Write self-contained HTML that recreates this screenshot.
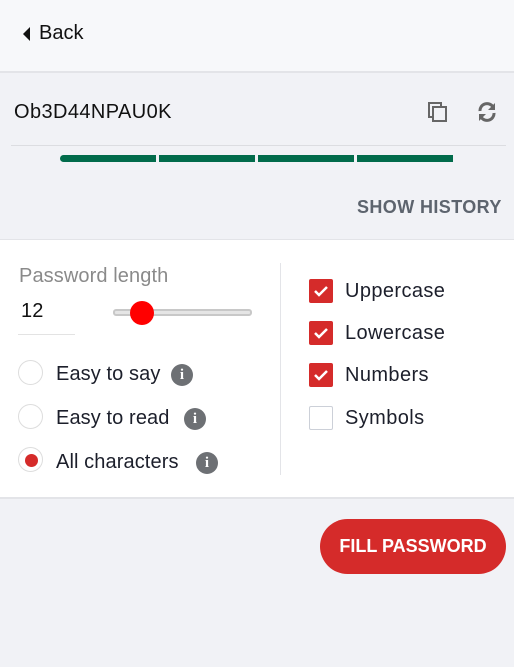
<!DOCTYPE html>
<html><head><style>
*{margin:0;padding:0;box-sizing:border-box}
body{width:514px;height:667px;position:relative;background:#f1f2f6;font-family:"Liberation Sans",sans-serif;overflow:hidden;color:#1c1f2b}
.a{position:absolute}
.t{font-size:20px;white-space:nowrap;letter-spacing:.1px}
.radio{position:absolute;width:25px;height:25px;border-radius:50%;border:1px solid #ddd;background:#fff}
.info{position:absolute;width:22px;height:22px;border-radius:50%;background:#6d7074;color:#fff;font:bold 15px/22px "Liberation Serif",serif;text-align:center}
.cb{position:absolute;left:309px;width:24px;height:24px;background:#d52b2a;border-radius:2px}
.cb svg{position:absolute;left:4px;top:5px}
.bar{position:absolute;top:155px;height:7px;background:#016b4b;width:96px}
</style></head><body>
<div class="a" style="left:0;top:0;width:514px;height:71px;background:#f7f8fa"></div>
<div class="a" style="left:0;top:71px;width:514px;height:2px;background:#e3e4e8"></div>
<svg class="a" style="left:23px;top:27px" width="8" height="14"><path d="M7 0L0 7L7 14Z" fill="#111"/></svg>
<div class="a t" style="left:39px;top:22px;font-size:20px;color:#111;letter-spacing:0">Back</div>
<div class="a" style="left:14px;top:101px;font-size:20px;color:#111;letter-spacing:.4px">Ob3D44NPAU0K</div>
<svg class="a" style="left:428px;top:102px" width="20" height="20"><rect x="1" y="1" width="12" height="14" fill="none" stroke="#666" stroke-width="2"/><rect x="5" y="5" width="13" height="14" fill="#f1f2f6" stroke="#666" stroke-width="2"/></svg>
<svg class="a" style="left:477px;top:102px" width="20" height="20" viewBox="0 0 20 20"><path d="M3 9A7 7 0 0 1 16 5" fill="none" stroke="#666" stroke-width="3"/><path d="M18 1V8H11Z" fill="#666"/><path d="M17 11A7 7 0 0 1 4 15" fill="none" stroke="#666" stroke-width="3"/><path d="M2 19V12H9Z" fill="#666"/></svg>
<div class="a" style="left:11px;top:145px;width:495px;height:1px;background:#dcdde1"></div>
<div class="bar" style="left:60px;border-radius:4px 0 0 4px"></div>
<div class="bar" style="left:159px"></div>
<div class="bar" style="left:258px"></div>
<div class="bar" style="left:357px"></div>
<div class="a" style="left:357px;top:197px;font-size:18px;font-weight:bold;color:#5d646e;letter-spacing:.4px">SHOW HISTORY</div>
<div class="a" style="left:0;top:239px;width:514px;height:260px;background:#fff;border-top:1px solid #e3e4e8;border-bottom:2px solid #e3e4e8"></div>
<div class="a t" style="left:19px;top:265px;color:#8a8a8a">Password length</div>
<div class="a t" style="left:21px;top:300px;color:#111">12</div>
<div class="a" style="left:18px;top:334px;width:57px;height:1px;background:#e3e3e3"></div>
<div class="a" style="left:113px;top:309px;width:139px;height:7px;border:2px solid #c8c8c8;border-radius:3px;background:#e5e5e5"></div>
<div class="a" style="left:130px;top:301px;width:24px;height:24px;border-radius:50%;background:#f00"></div>
<div class="radio" style="left:18px;top:360px"></div>
<div class="a t" style="left:56px;top:363px">Easy to say</div>
<div class="info" style="left:171px;top:364px">i</div>
<div class="radio" style="left:18px;top:404px"></div>
<div class="a t" style="left:56px;top:407px">Easy to read</div>
<div class="info" style="left:184px;top:408px">i</div>
<div class="radio" style="left:18px;top:447px"><div class="a" style="left:6px;top:6px;width:13px;height:13px;border-radius:50%;background:#d52b2a"></div></div>
<div class="a t" style="left:56px;top:451px">All characters</div>
<div class="info" style="left:196px;top:452px">i</div>
<div class="a" style="left:280px;top:263px;width:1px;height:212px;background:#e3e4e8"></div>
<div class="cb" style="top:279px"><svg width="16" height="14"><path d="M2 7L6 11L14 3" fill="none" stroke="#fff" stroke-width="2.5"/></svg></div>
<div class="a t" style="left:345px;top:280px;letter-spacing:.4px">Uppercase</div>
<div class="cb" style="top:321px"><svg width="16" height="14"><path d="M2 7L6 11L14 3" fill="none" stroke="#fff" stroke-width="2.5"/></svg></div>
<div class="a t" style="left:345px;top:322px;letter-spacing:.4px">Lowercase</div>
<div class="cb" style="top:363px"><svg width="16" height="14"><path d="M2 7L6 11L14 3" fill="none" stroke="#fff" stroke-width="2.5"/></svg></div>
<div class="a t" style="left:345px;top:364px;letter-spacing:.4px">Numbers</div>
<div class="cb" style="top:406px;background:#fff;border:1px solid #ccd0d8"></div>
<div class="a t" style="left:345px;top:407px;letter-spacing:.4px">Symbols</div>
<div class="a" style="left:320px;top:519px;width:186px;height:55px;border-radius:28px;background:#d52b2a;color:#fff;font-size:18px;font-weight:bold;text-align:center;line-height:55px">FILL PASSWORD</div>
</body></html>
